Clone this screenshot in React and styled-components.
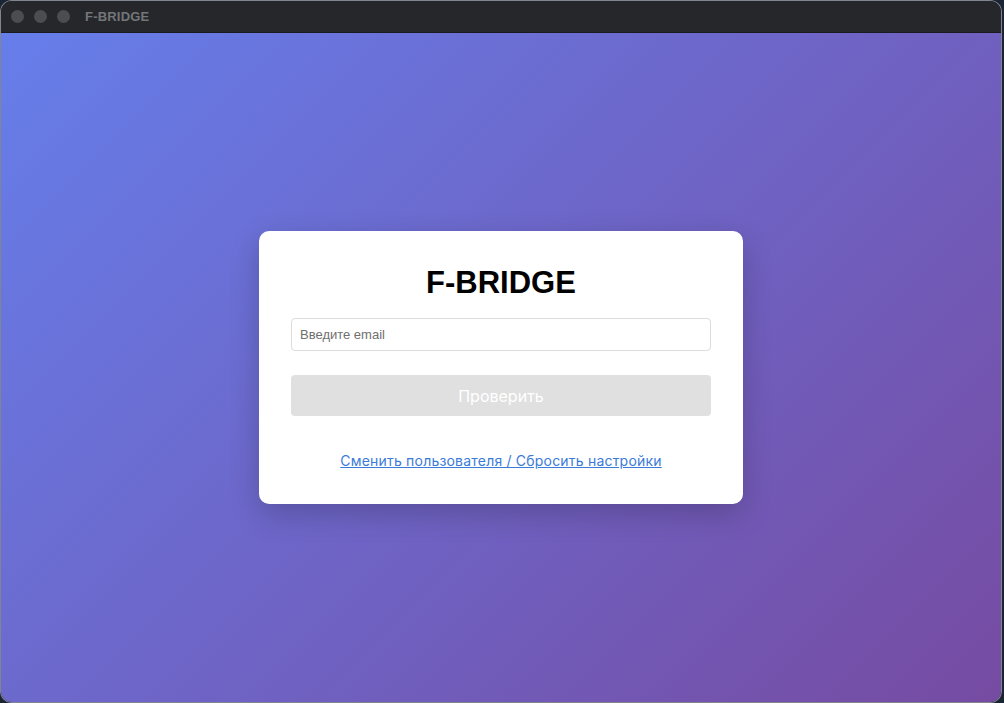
import React from "react"
import styled, { createGlobalStyle } from "styled-components"

const GlobalStyle = createGlobalStyle`
  html, body {
    margin: 0;
    padding: 0;
    background: #1b2433;
  }
  * {
    box-sizing: border-box;
  }
`

const Window = styled.div`
  width: 1002px;
  height: 703px;
  display: flex;
  flex-direction: column;
  border-radius: 12px;
  overflow: hidden;
  border: 1px solid rgba(190, 196, 210, 0.6);
  background: #25272b;
`

const TitleBar = styled.div`
  height: 32px;
  flex: 0 0 32px;
  display: flex;
  align-items: center;
  padding-left: 10px;
  background: #25272b;
  border-bottom: 1px solid #1a1b1e;
`

const Light = styled.span`
  width: 13px;
  height: 13px;
  border-radius: 50%;
  background: #4b4d51;
  margin-right: 10px;
`

const WindowTitle = styled.span`
  margin-left: 5px;
  font-family: "Liberation Sans", Arial, sans-serif;
  font-weight: 700;
  font-size: 13px;
  color: #74767a;
  letter-spacing: 0.2px;
`

const Body = styled.main`
  flex: 1;
  display: flex;
  align-items: center;
  justify-content: center;
  background: linear-gradient(135deg, #667eea 0%, #764ba2 100%);
`

const Card = styled.div`
  width: 484px;
  padding: 34px 32px 33px;
  background: #fff;
  border-radius: 10px;
  box-shadow: 0 10px 30px rgba(0, 0, 0, 0.2);
  display: flex;
  flex-direction: column;
`

const Heading = styled.h1`
  margin: 0 0 17px;
  text-align: center;
  font-family: "Liberation Sans", Arial, sans-serif;
  font-weight: 700;
  font-size: 31px;
  line-height: 36px;
  color: #000;
`

const EmailInput = styled.input`
  height: 33px;
  width: 100%;
  padding: 0 8px;
  border: 1px solid #dcdcdc;
  border-radius: 4px;
  font-family: "Liberation Sans", Arial, sans-serif;
  font-size: 13px;
  color: #222;
  outline: none;

  &::placeholder {
    color: #6f6f6f;
  }
`

const CheckButton = styled.button`
  margin-top: 24px;
  height: 41px;
  width: 100%;
  border: none;
  border-radius: 4px;
  background: #e0e0e0;
  color: #fff;
  font-family: Inter, "Liberation Sans", sans-serif;
  font-size: 16px;
  cursor: not-allowed;
`

const ResetLink = styled.a`
  margin-top: 35px;
  align-self: center;
  font-family: Inter, "Liberation Sans", sans-serif;
  font-size: 14px;
  line-height: 20px;
  letter-spacing: 0.2px;
  color: #3a7bd8;
  text-decoration: underline;
  cursor: pointer;
`

export default function App() {
  return (
    <>
      <GlobalStyle />
      <Window>
        <TitleBar>
          <Light />
          <Light />
          <Light />
          <WindowTitle>F-BRIDGE</WindowTitle>
        </TitleBar>
        <Body>
          <Card>
            <Heading>F-BRIDGE</Heading>
            <EmailInput type="email" placeholder="Введите email" />
            <CheckButton disabled>Проверить</CheckButton>
            <ResetLink>Сменить пользователя / Сбросить настройки</ResetLink>
          </Card>
        </Body>
      </Window>
    </>
  )
}
